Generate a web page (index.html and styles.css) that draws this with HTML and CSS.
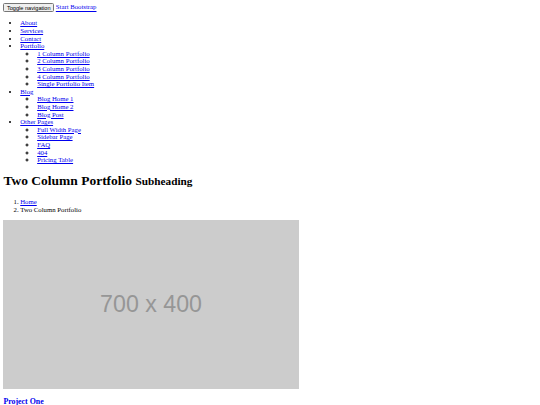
FILE: index.html
```html
<!DOCTYPE html>
<html lang="en">
<head>
<meta charset="utf-8">
<title>Two Column Portfolio</title>
<link rel="stylesheet" href="styles.css">
</head>
<body>
<nav class="navbar">
  <button type="button" class="toggler">Toggle navigation</button>
  <a class="brand" href="#">Start Bootstrap</a>
  <ul class="nav">
    <li><a href="#">About</a></li>
    <li><a href="#">Services</a></li>
    <li><a href="#">Contact</a></li>
    <li><a href="#">Portfolio</a>
      <ul>
        <li><a href="#">1 Column Portfolio</a></li>
        <li><a href="#">2 Column Portfolio</a></li>
        <li><a href="#">3 Column Portfolio</a></li>
        <li><a href="#">4 Column Portfolio</a></li>
        <li><a href="#">Single Portfolio Item</a></li>
      </ul>
    </li>
    <li><a href="#">Blog</a>
      <ul>
        <li><a href="#">Blog Home 1</a></li>
        <li><a href="#">Blog Home 2</a></li>
        <li><a href="#">Blog Post</a></li>
      </ul>
    </li>
    <li><a href="#">Other Pages</a>
      <ul>
        <li><a href="#">Full Width Page</a></li>
        <li><a href="#">Sidebar Page</a></li>
        <li><a href="#">FAQ</a></li>
        <li><a href="#">404</a></li>
        <li><a href="#">Pricing Table</a></li>
      </ul>
    </li>
  </ul>
</nav>
<div class="container">
  <h1 class="title">Two Column Portfolio <small>Subheading</small></h1>
  <ol class="breadcrumb">
    <li><a href="#">Home</a></li>
    <li>Two Column Portfolio</li>
  </ol>
  <div class="row">
    <div class="item">
      <a href="#" class="thumb"><span class="placeholder">700 x 400</span></a>
      <h3 class="item-title"><a href="#">Project One</a></h3>
    </div>
  </div>
</div>
</body>
</html>
```
FILE: styles.css
```css
html {
  zoom: 0.421875;
}
body {
  margin: 8px;
  font-family: "Liberation Serif", "Times New Roman", serif;
  font-size: 16px;
  line-height: 18px;
  color: #000;
  background: #fff;
}
a {
  color: #0000ee;
}
.navbar {
  line-height: 21px;
}
.toggler {
  font-family: "Liberation Sans", Arial, sans-serif;
  font-size: 13.333px;
}
.nav {
  margin: 16px 0;
  padding-left: 40px;
  line-height: 18px;
}
.nav ul {
  padding-left: 40px;
  list-style-type: circle;
}
.title {
  font-size: 32px;
  line-height: 36.8px;
  margin: 21.44px 0;
}
.title small {
  font-size: 26.667px;
}
.breadcrumb {
  margin: 16px 0;
  padding-left: 40px;
}
.thumb {
  display: block;
  width: 700px;
  height: 400px;
  text-decoration: none;
}
.placeholder {
  display: flex;
  align-items: center;
  justify-content: center;
  width: 100%;
  height: 100%;
  background: #cccccc;
  color: #969696;
  font-family: "Liberation Sans", Arial, sans-serif;
  font-size: 55px;
  line-height: 1;
}
.item-title {
  font-size: 18.72px;
  line-height: 22px;
  margin: 20px 0 18.72px;
}
```
